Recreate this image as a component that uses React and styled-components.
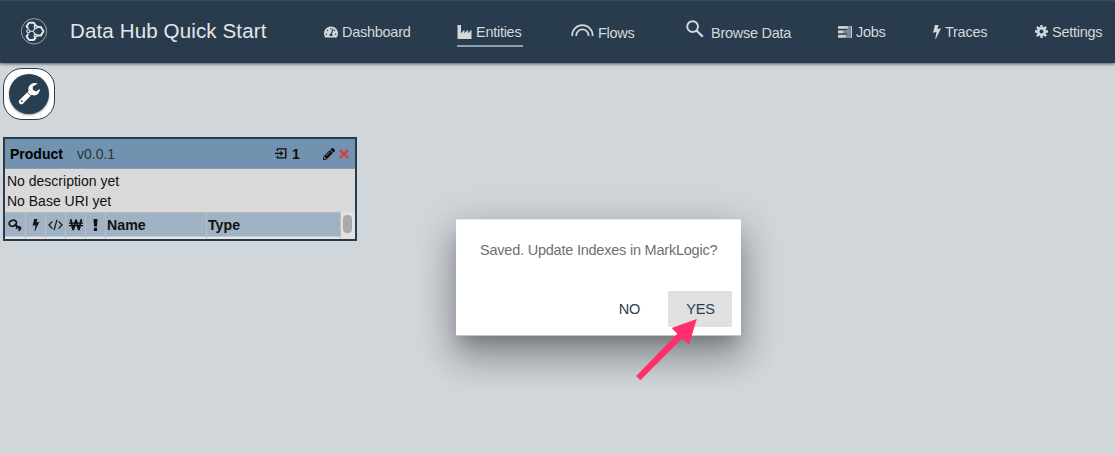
import React from "react";
import styled, { createGlobalStyle } from "styled-components";
import { FaTachometerAlt, FaPencilAlt } from "react-icons/fa";

const GlobalStyle = createGlobalStyle`
  * { box-sizing: border-box; }
  body {
    margin: 0;
    background: #d1d6db;
    font-family: "Liberation Sans", Arial, sans-serif;
    overflow: hidden;
  }
  svg { display: block; flex: none; }
`;

const Page = styled.div`
  position: relative;
  height: 454px;
  background: #d1d6db;
`;

const Header = styled.header`
  display: flex;
  height: 63px;
  padding-left: 20px;
  background: #283c4d;
  border-top: 1px solid #3a4d5d;
  box-shadow: 0 1px 3px rgba(0, 0, 0, 0.6);
  color: #d5d8da;
`;

const Logo = styled.div`
  width: 50px;
  padding-top: 16px;
`;

const Title = styled.h1`
  width: 254px;
  margin: 0;
  padding-top: 17px;
  font-size: 20.5px;
  line-height: 25px;
  font-weight: 400;
  letter-spacing: 0.14px;
  color: #e6e7e8;
  white-space: nowrap;
`;

const Nav = styled.nav`
  display: grid;
  grid-template-columns: 133px 114px 115px 152px 95px 102px 70px;
`;

const NavItem = styled.a`
  display: flex;
  align-items: center;
  justify-self: start;
  gap: ${(p) => p.$gap || 4}px;
  height: 29px;
  margin-top: ${(p) => p.$top || 17}px;
  padding-right: 2px;
  font-size: 14.5px;
  line-height: 18px;
  letter-spacing: -0.27px;
  white-space: nowrap;
  border-bottom: 2px solid ${(p) => (p.$active ? "#94a0a9" : "transparent")};
`;

const Raised = styled.span`
  height: 27px;
  padding-top: ${(p) => p.$top}px;
`;

const Tool = styled.button`
  display: flex;
  align-items: center;
  justify-content: center;
  width: 52px;
  height: 52px;
  margin: 5px 0 0 3px;
  padding: 0;
  border: 1px solid #283c4d;
  border-radius: 19px;
  background: #fff;
`;

const ToolDisc = styled.span`
  display: flex;
  align-items: center;
  justify-content: center;
  width: 40px;
  height: 40px;
  border-radius: 50%;
  background: #283f52;
  color: #fff;
  box-shadow: 0 1px 2px rgba(0, 0, 0, 0.4);
`;

const Card = styled.section`
  width: 354px;
  height: 104px;
  margin: 17px 0 0 3px;
  border: 2px solid #273c4e;
  background: #d9d9d9;
  color: #111;
  overflow: hidden;
`;

const CardHead = styled.div`
  display: flex;
  align-items: center;
  height: 30px;
  padding: 0 6px 0 5px;
  background: #7193af;
  border-bottom: 1px solid #83a0b8;
  font-size: 14px;
`;

const Name = styled.strong`
  width: 67px;
  color: #000;
`;

const Version = styled.span`
  flex: 1;
  color: #2b3338;
`;

const Count = styled.strong`
  width: 36px;
  padding-left: 5px;
`;

const Pencil = styled(FaPencilAlt)`
  margin-right: 4px;
  color: #111;
`;

const Info = styled.div`
  height: 43px;
  padding: 2px 2px 0;
  font-size: 14px;
  line-height: 20px;
`;

const Table = styled.div`
  display: flex;
  height: 27px;
`;

const Columns = styled.div`
  display: grid;
  grid-template-columns: 21px 20px 20px 20px 20px 101px 134px;
  grid-template-rows: 23px 4px;
  width: 336px;
  border-top: 1px solid #b3b9bd;
`;

const Th = styled.div`
  display: flex;
  align-items: center;
  justify-content: ${(p) => (p.$text ? "flex-start" : "center")};
  padding-left: ${(p) => (p.$text ? 1 : 0)}px;
  background: #9fb3c4;
  border-right: 1px solid #b9bec2;
  font-size: 14.2px;
  font-weight: 700;
`;

const Td = styled.div`
  background: #e6e7e8;
  border-top: 1px solid #c3c6c8;
  border-right: 1px solid #b9bec2;
`;

const Scrollbar = styled.div`
  flex: 1;
  padding: 3px 3px 0 2px;
  background: #e2e2e2;
`;

const Thumb = styled.div`
  width: 9px;
  height: 18px;
  border-radius: 4px;
  background: #a9a9a9;
`;

const Dialog = styled.div`
  position: absolute;
  left: 456px;
  top: 219px;
  width: 285px;
  height: 117px;
  padding: 20px 9px 8px 24px;
  display: flex;
  flex-direction: column;
  justify-content: space-between;
  background: #fff;
  border-top: 1px solid #e5e8ea;
  border-bottom: 1px solid #c5c7c8;
  box-shadow: 0 9px 38px 6px rgba(0, 0, 0, 0.14), 0 11px 15px -7px rgba(0, 0, 0, 0.2),
    0 22px 32px 2px rgba(0, 0, 0, 0.24);
`;

const Message = styled.p`
  margin: 0;
  font-size: 14.5px;
  line-height: 20px;
  color: #6f6f6f;
  letter-spacing: -0.22px;
  white-space: nowrap;
`;

const Actions = styled.div`
  display: flex;
  justify-content: flex-end;
  gap: 7px;
`;

const Action = styled.button`
  width: 64px;
  height: 36px;
  padding: 0 0 0 1px;
  border: 0;
  border-radius: 2px;
  background: ${(p) => (p.$focused ? "#e0e0e0" : "transparent")};
  color: #283f52;
  font: 14.5px "Liberation Sans", Arial, sans-serif;
  letter-spacing: -0.2px;
`;

const Pointer = styled.svg`
  position: absolute;
  left: 630px;
  top: 314px;
`;

const HexLogo = () => (
  <svg width="28" height="28" viewBox="0 0 28 28" fill="none" stroke="#e4e7e9">
    <circle cx="14" cy="14.3" r="12.7" strokeWidth="0.9" stroke="#a3adb5" />
    <path d="M14.6 9.8 15.3 7.6 13.6 5.7H9L6.6 9.3 8.2 11.6M8.2 17 6.6 19.4 9 23H13.6L15.3 21 14.6 18.6M16.5 10H20.8L23.5 14.3 20.8 18.6H16.5" strokeWidth="2" strokeLinejoin="round" />
    <path d="M9.8 14.3H13L15.5 10.8M13 14.3 15.5 17.8" strokeWidth="1.1" />
    <circle cx="8.4" cy="14.3" r="1.6" strokeWidth="1.1" />
    <circle cx="15.7" cy="10" r="1.6" strokeWidth="1.1" />
    <circle cx="15.7" cy="18.6" r="1.6" strokeWidth="1.1" />
  </svg>
);

const FactoryIcon = () => (
  <svg width="15" height="14" viewBox="0 0 15 14" fill="currentColor">
    <path d="M.5 0H4v8.3L7.4 4.8v3.5L10.9 4.8v3.5L14.5 4.8V14H.5z" />
  </svg>
);

const ArcIcon = () => (
  <svg width="23" height="13" viewBox="0 0 23 13" fill="none" stroke="currentColor" strokeWidth="1.7">
    <path d="M1.2 12V11a10.2 9.8 0 0 1 20.4 0v1M5.3 12v-.7a6.1 5.9 0 0 1 12.2 0v.7" />
  </svg>
);

const SearchIcon = () => (
  <svg width="18" height="18" viewBox="0 0 18 18" fill="none" stroke="currentColor" strokeWidth="1.9">
    <circle cx="6.6" cy="6.6" r="5.4" />
    <path d="M10.5 10.5 16.8 16.8" strokeWidth="2.3" />
  </svg>
);

const TasksIcon = () => (
  <svg width="14" height="12" viewBox="0 0 14 12">
    <path fill="#7d8993" d="M0 0h14v12H0z" />
    <path fill="#d5d8da" d="M0 .3h9.8v2.3H0zM0 4.8h5v2.2H0zM0 9.2h7.8v2.3H0zM13.2 0h.8v12h-.8z" />
    <path fill="#283c4d" d="M0 3h9v1.1H0zM0 7.5h9v1.1H0z" />
  </svg>
);

const BoltIcon = ({ width = 8, height = 14 }) => (
  <svg width={width} height={height} viewBox="0 0 8 14" fill="currentColor">
    <path d="M2 0H5.6L4.4 4 8 3.2 2.8 14H2.2L3.5 7 0 7.8z" />
  </svg>
);

const CogIcon = () => (
  <svg width="13" height="13" viewBox="0 0 13 13" fill="none" stroke="currentColor">
    <circle cx="6.5" cy="6.5" r="3.35" strokeWidth="2.7" />
    <path
      d="M6.5 0v2.5M6.5 10.5V13M0 6.5h2.5M10.5 6.5H13M1.9 1.9l1.7 1.7M9.4 9.4l1.7 1.7M11.1 1.9 9.4 3.6M3.6 9.4l-1.7 1.7"
      strokeWidth="2.3"
    />
  </svg>
);

const WrenchIcon = () => (
  <svg width="24" height="24" viewBox="0 0 24 24">
    <path d="M12.8 11.2 4.3 19.7" stroke="#fff" strokeWidth="5" strokeLinecap="round" />
    <path
      fill="#fff"
      d="M20.7 1.7A6.4 6.4 0 0 0 11.3 7.5 6.2 6.2 0 0 0 17.2 13.6 6.3 6.3 0 0 0 22.9 7.1L18.9 9.4 15.8 7.7V4.4z"
    />
    <path d="m9.8 9.9 4.3 4.3" stroke="#283f52" strokeWidth="0.8" />
    <circle cx="4.9" cy="19.2" r="0.9" fill="#283f52" />
  </svg>
);

const KeyIcon = () => (
  <svg width="14" height="14" viewBox="0 0 14 14" fill="none" stroke="currentColor">
    <ellipse cx="4.8" cy="5.2" rx="3.7" ry="2.9" strokeWidth="1.7" transform="rotate(-20 4.8 5.2)" />
    <path d="m7 6.6 5.8 5" strokeWidth="2" />
    <path d="m9.5 8.8-1.5 2M12 11.1l-1.4 1.9M11 8.2l1.9 1.5" strokeWidth="1.4" />
  </svg>
);

const CodeIcon = () => (
  <svg width="15" height="12" viewBox="0 0 15 12" fill="none" stroke="currentColor" strokeWidth="1.2">
    <path d="M4.4 2.4.9 6l3.5 3.6M10.6 2.4 14.1 6l-3.5 3.6M8.9.8 6.1 11.2" />
  </svg>
);

const WonIcon = () => (
  <svg width="14" height="12" viewBox="0 0 14 12" fill="none" stroke="currentColor">
    <path d="M1.6.3 4.2 11 7 .8 9.8 11 12.4.3" strokeWidth="1.9" strokeLinejoin="bevel" />
    <path d="M0 4.1h14M0 6.6h14" strokeWidth="1.1" />
  </svg>
);

const EnterIcon = () => (
  <svg width="12" height="11" viewBox="0 0 12 11" fill="none" stroke="#111" strokeWidth="1.4">
    <path d="M2.4 3V.9h8.4v9H2.4V7.8" />
    <path d="M0 5.4h6.5" />
    <path d="M5.4 2.7 8.4 5.4 5.4 8.1z" fill="#111" stroke="none" />
  </svg>
);

const CloseIcon = () => (
  <svg width="10" height="10" viewBox="0 0 10 10" stroke="#c9474b" strokeWidth="2.8">
    <path d="m1 1 8 8M9 1 1 9" />
  </svg>
);

const BangIcon = () => (
  <svg width="5" height="12" viewBox="0 0 5 12" fill="currentColor">
    <path d="M.5 0h4l-.5 7.5H1zM.9 8.8h3.2V12H.9z" />
  </svg>
);

export default function App() {
  return (
    <Page>
      <GlobalStyle />
      <Header>
        <Logo><HexLogo /></Logo>
        <Title>Data Hub Quick Start</Title>
        <Nav>
          <NavItem><FaTachometerAlt size={14} />Dashboard</NavItem>
          <NavItem $active><FactoryIcon />Entities</NavItem>
          <NavItem $top={18} $gap={4}><Raised $top={5}><ArcIcon /></Raised>Flows</NavItem>
          <NavItem $top={18} $gap={7}><Raised $top={1}><SearchIcon /></Raised>Browse Data</NavItem>
          <NavItem><TasksIcon />Jobs</NavItem>
          <NavItem><BoltIcon />Traces</NavItem>
          <NavItem><CogIcon />Settings</NavItem>
        </Nav>
      </Header>
      <Tool aria-label="Tools">
        <ToolDisc><WrenchIcon /></ToolDisc>
      </Tool>
      <Card>
        <CardHead>
          <Name>Product</Name>
          <Version>v0.0.1</Version>
          <EnterIcon />
          <Count>1</Count>
          <Pencil size={12} />
          <CloseIcon />
        </CardHead>
        <Info>
          <div>No description yet</div>
          <div>No Base URI yet</div>
        </Info>
        <Table>
          <Columns>
            <Th><KeyIcon /></Th>
            <Th><BoltIcon height={12} /></Th>
            <Th><CodeIcon /></Th>
            <Th><WonIcon /></Th>
            <Th><BangIcon /></Th>
            <Th $text>Name</Th>
            <Th $text>Type</Th>
            <Td /><Td /><Td /><Td /><Td /><Td /><Td />
          </Columns>
          <Scrollbar><Thumb /></Scrollbar>
        </Table>
      </Card>
      <Dialog role="dialog">
        <Message>Saved. Update Indexes in MarkLogic?</Message>
        <Actions>
          <Action>NO</Action>
          <Action $focused>YES</Action>
        </Actions>
      </Dialog>
      <Pointer width="70" height="70" viewBox="0 0 70 70">
        <path fill="#ff2f6d" d="M66.8 5 41.7 14 47.3 19.8 6.2 62 10.4 66.2 52 24.5 59 30.4z" />
      </Pointer>
    </Page>
  );
}
